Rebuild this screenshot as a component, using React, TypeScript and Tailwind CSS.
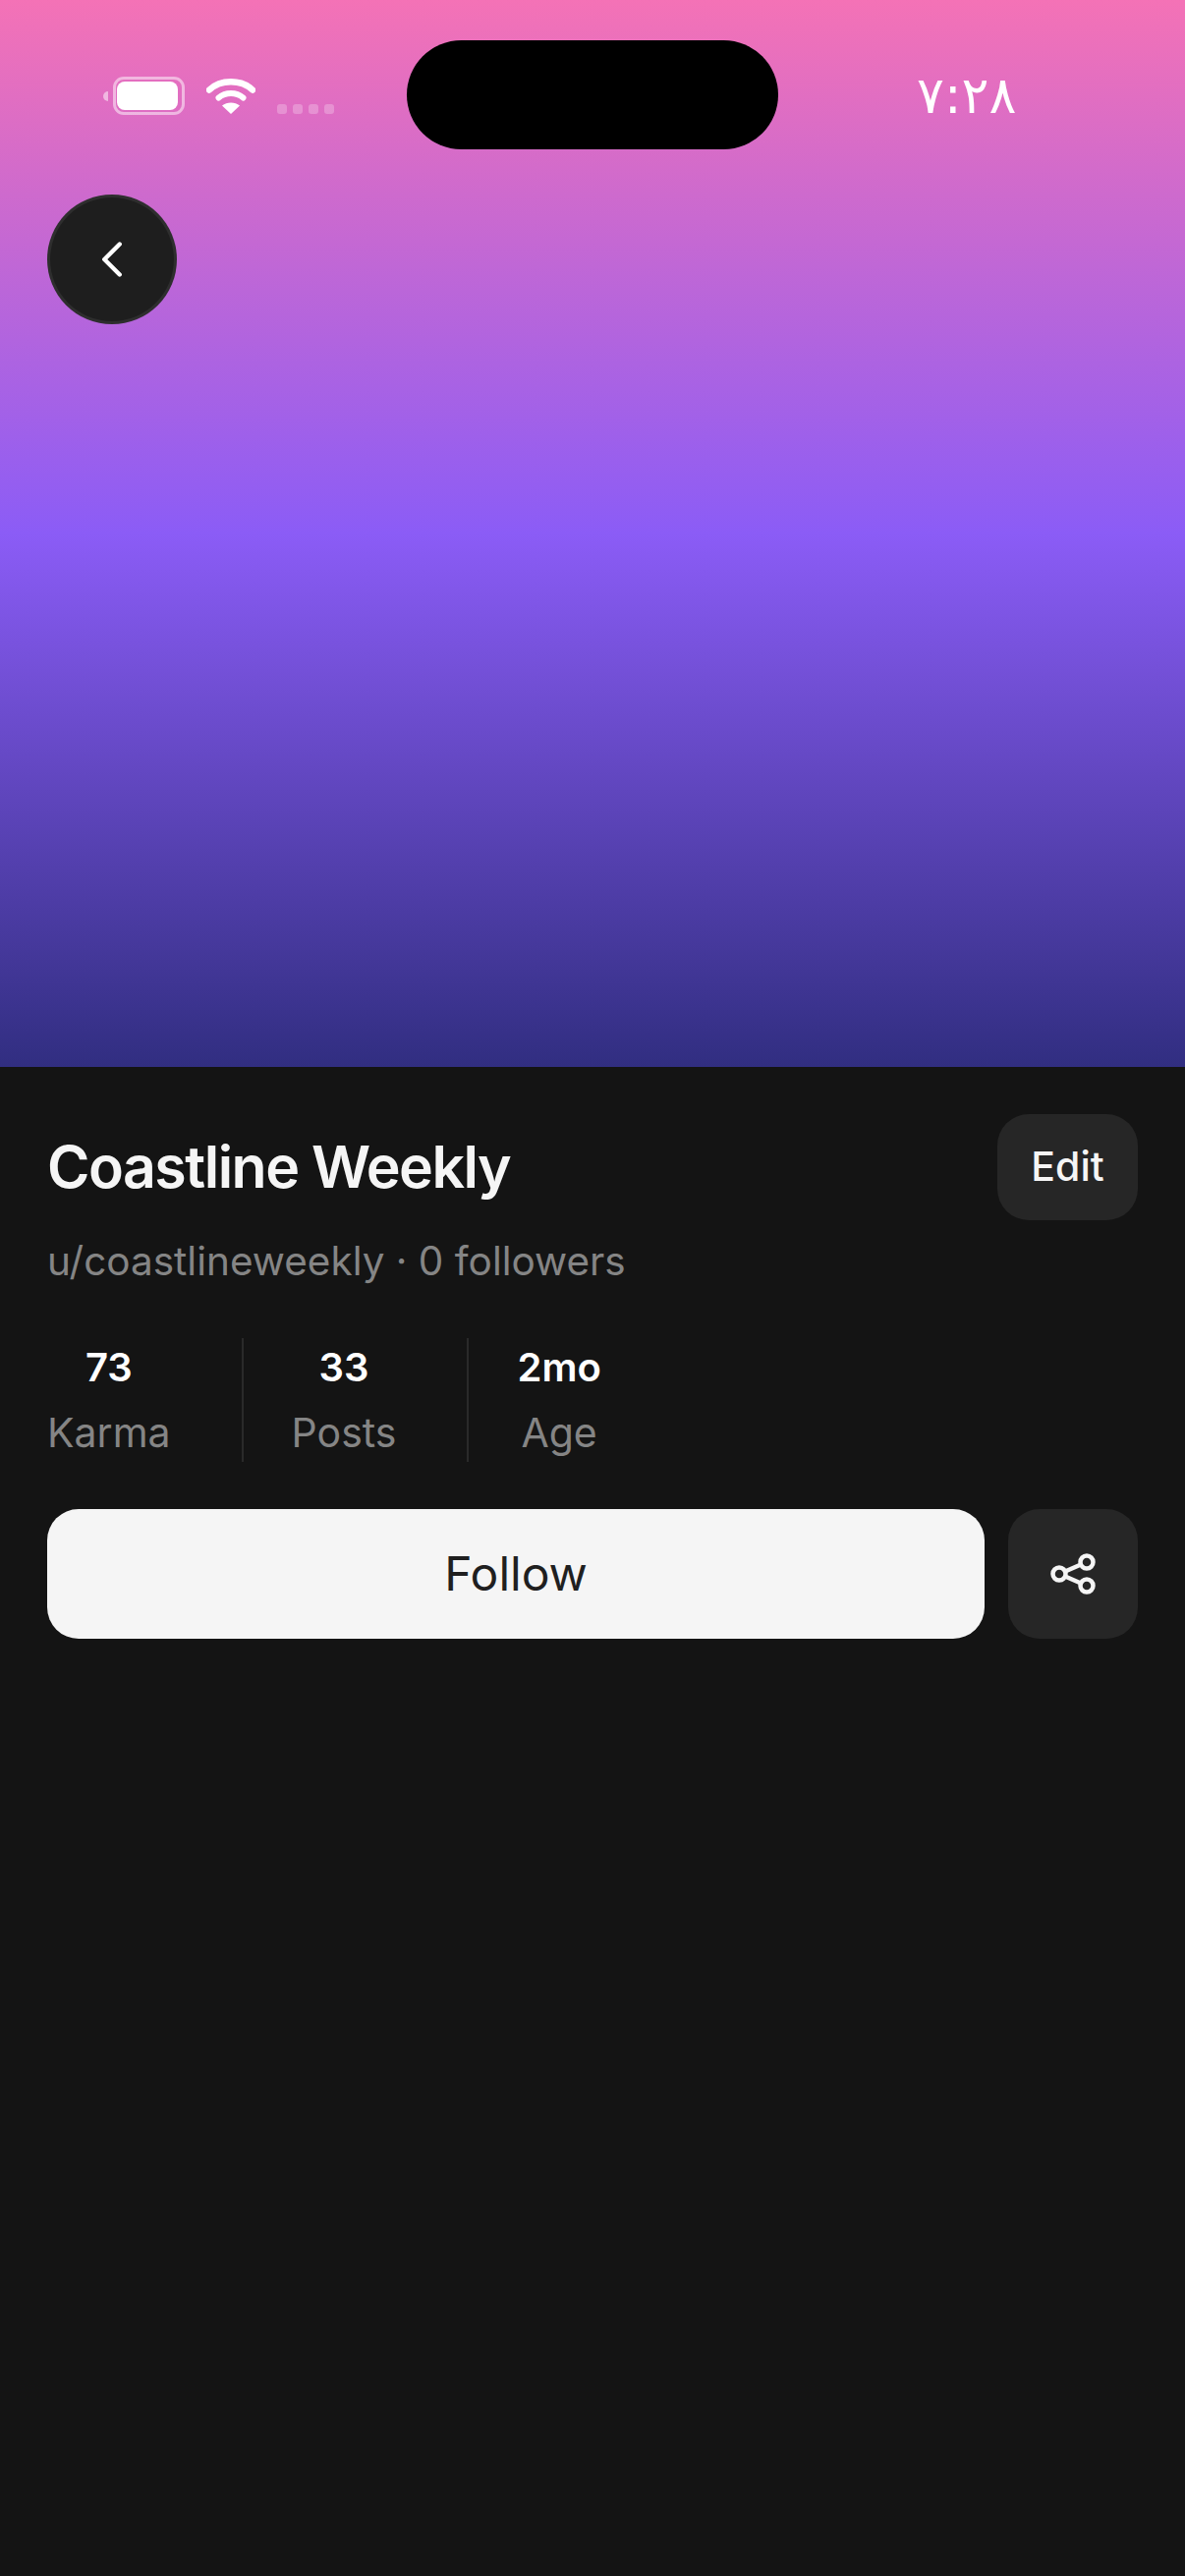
import { ChevronLeft } from 'lucide-react';

function StatusIcons() {
  return (
    <div className="flex items-center">
      <div className="mr-[5px] h-[10px] w-[5px] rounded-l-full bg-white/50" />
      <div className="flex h-[39px] w-[73px] rounded-[11px] border-[3px] border-white/50 py-[2px] pl-[1px]">
        <div className="w-[62px] rounded-[8px] bg-white" />
      </div>
      <svg className="ml-[22px]" width="50" height="38" viewBox="0 0 50 38" fill="none">
        <path d="M3 12.5C14.5 1.5 35.5 1.5 47 12.5" stroke="white" strokeWidth="6.5" strokeLinecap="round" />
        <path d="M12.5 20.5C19.5 14.5 30.5 14.5 37.5 20.5" stroke="white" strokeWidth="6" strokeLinecap="round" />
        <path d="M25 37L16 28.5C21 24.5 29 24.5 34 28.5L25 37Z" fill="white" />
      </svg>
      <div className="ml-[22px] mt-[27px] flex gap-[6px]">
        <div className="h-[10px] w-[10px] rounded-[3px] bg-white/25" />
        <div className="h-[10px] w-[10px] rounded-[3px] bg-white/25" />
        <div className="h-[10px] w-[10px] rounded-[3px] bg-white/25" />
        <div className="h-[10px] w-[10px] rounded-[3px] bg-white/25" />
      </div>
    </div>
  );
}

function Stat({ value, label }: { value: string; label: string }) {
  return (
    <div className="flex flex-col items-center gap-[6px]">
      <div className="text-[40px] leading-[60px] font-semibold text-white">{value}</div>
      <div className="text-[41px] leading-[60px] text-[#858585]">{label}</div>
    </div>
  );
}

function Divider() {
  return <div className="ml-[72px] mr-[49px] h-[126px] w-[2px] bg-[#2a2a2a]" />;
}

export default function App() {
  return (
    <div className="flex h-[2622px] w-[1206px] flex-col overflow-hidden bg-[#141414] font-['Inter',sans-serif]">
      <div className="h-[1086px] bg-[linear-gradient(180deg,#f472b6_0%,#8b5cf6_50%,#312e81_100%)] px-[48px] pt-[41px]">
        <div className="flex h-[111px] items-center">
          <div className="w-[366px] pl-[57px] pt-[2px]">
            <StatusIcons />
          </div>
          <div className="h-[111px] w-[378px] rounded-full bg-black" />
          <div className="ml-[141px] font-['DejaVu_Sans',sans-serif] text-[52px] leading-none text-white">۷:۲۸</div>
        </div>
        <button className="mt-[46px] flex h-[132px] w-[132px] items-center justify-center rounded-full border-[3px] border-white/[0.07] bg-[#1e1e1e] text-white">
          <ChevronLeft size={62} strokeWidth={1.7} />
        </button>
      </div>

      <div className="flex flex-col px-[48px] pt-[48px]">
        <div className="flex items-center justify-between">
          <h1 className="text-[59px] leading-[94px] font-semibold tracking-[-1.5px] text-[#f5f5f5]">Coastline Weekly</h1>
          <button className="flex h-[108px] w-[143px] items-center justify-center rounded-[32px] bg-[#262626] text-[41px] font-medium text-[#f5f5f5]">
            Edit
          </button>
        </div>
        <p className="mt-[12px] text-[40.5px] leading-[60px] text-[#858585]">u/coastlineweekly · 0 followers</p>
        <div className="mt-[48px] flex items-center">
          <Stat value="73" label="Karma" />
          <Divider />
          <Stat value="33" label="Posts" />
          <Divider />
          <Stat value="2mo" label="Age" />
        </div>
        <div className="mt-[48px] flex gap-[24px]">
          <button className="flex h-[132px] flex-1 items-center justify-center rounded-[32px] bg-[#f5f5f5] text-[48px] font-normal text-[#1f1f1f]">
            Follow
          </button>
          <button className="flex h-[132px] w-[132px] items-center justify-center rounded-[32px] bg-[#262626]">
            <svg width="46" height="42" viewBox="0 0 46 42" fill="none" stroke="#f5f5f5" strokeWidth="4.5">
              <circle cx="9" cy="21" r="6.5" />
              <circle cx="37" cy="9" r="6.5" />
              <circle cx="37" cy="33" r="6.5" />
              <path d="M15 18.5L31 11.5M15 23.5L31 30.5" />
            </svg>
          </button>
        </div>
      </div>
    </div>
  );
}
